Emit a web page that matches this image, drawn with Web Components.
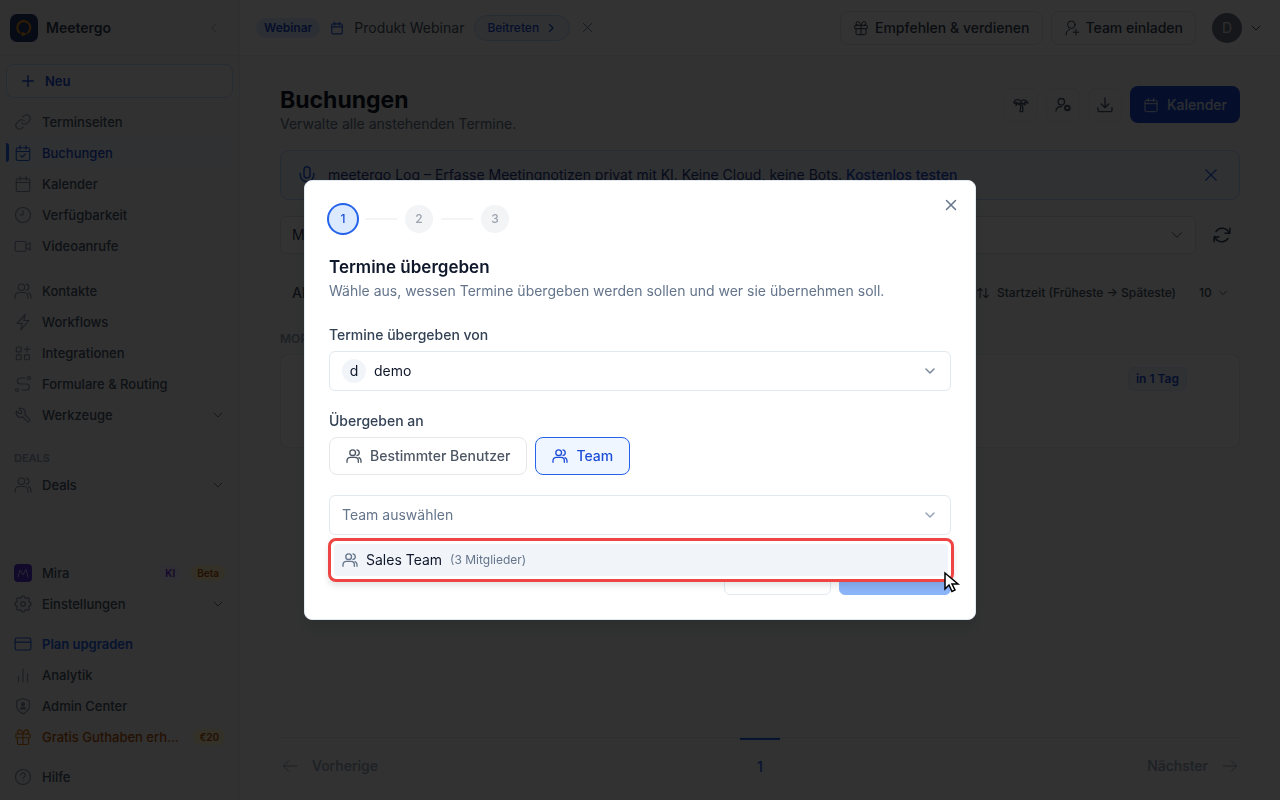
<!DOCTYPE html>
<html lang="de">
<head>
<meta charset="utf-8">
<meta name="viewport" content="width=device-width, initial-scale=1">
<title>Buchungen – Meetergo</title>
<style>
    body {
        margin: 0;
        font-family: Inter, "Liberation Sans", sans-serif;
        font-size: 14px;
        line-height: 20px;
        color: #0f172a;
    }
</style>
</head>
<body>
<meetergo-app></meetergo-app>

<script>
const ICONS = {
    link: '<path d="M10 13a5 5 0 0 0 7.500.5l3-3a5 5 0 0 0-7-7l-1.700 1.700"/><path d="M14 11a5 5 0 0 0-7.500-.5l-3 3a5 5 0 0 0 7 7l1.700-1.700"/>',
    calendar: '<rect x="3" y="5" width="18" height="17" rx="2"/><path d="M8 2v5M16 2v5M3 10h18"/>',
    calendarCheck: '<rect x="3" y="5" width="18" height="17" rx="2"/><path d="M8 2v5M16 2v5M3 10h18M9 15.500l2 2 4-4"/>',
    clock: '<circle cx="12" cy="12" r="10"/><path d="M12 6v6H8"/>',
    video: '<rect x="1.500" y="6" width="14.500" height="13" rx="2"/><path d="M16 11l5.500-3.500v10L16 14"/>',
    users: '<circle cx="10" cy="7" r="4.300"/><path d="M1.500 21.500v-2.500a5 5 0 0 1 5-5h7a5 5 0 0 1 5 5v2.500M16.500 2.800a4.300 4.300 0 0 1 0 8.400M22.500 21.500v-2.500a5 5 0 0 0-3-4.600"/>',
    bolt: '<path d="M15 2L4 14h7l-2 8.500L20 10h-7z"/>',
    apps: '<rect x="3" y="4" width="6.500" height="6.500" rx="1"/><rect x="3" y="14.500" width="6.500" height="6.500" rx="1"/><rect x="14" y="14.500" width="6.500" height="6.500" rx="1"/><path d="M17.500 3.500v7M14 7h7"/>',
    route: '<circle cx="4" cy="20" r="2"/><circle cx="20" cy="4" r="2"/><path d="M14.500 4H8.500a4 4 0 0 0 0 8h8a4 4 0 0 1 0 8H10.500"/>',
    wrench: '<path d="M7 10h3V7L6.500 3.500a6 6 0 0 1 8 8l6 6a2.100 2.100 0 0 1-3 3l-6-6a6 6 0 0 1-8-8z"/>',
    gear: '<g transform="translate(-2.400 -2.400) scale(1.200)"><path d="M10.300 4.300c.4-1.800 3-1.800 3.400 0a1.700 1.700 0 0 0 2.600 1.100c1.500-1 3.300.8 2.400 2.400a1.700 1.700 0 0 0 1 2.500c1.800.4 1.800 3 0 3.400a1.700 1.700 0 0 0-1 2.600c.9 1.500-.9 3.300-2.400 2.400a1.700 1.700 0 0 0-2.600 1c-.4 1.800-3 1.800-3.400 0a1.700 1.700 0 0 0-2.600-1c-1.500.9-3.300-.9-2.400-2.400a1.700 1.700 0 0 0-1-2.600c-1.800-.4-1.800-3 0-3.400a1.700 1.700 0 0 0 1-2.500c-.9-1.600.9-3.400 2.400-2.400a1.700 1.700 0 0 0 2.600-1.100z"/><circle cx="12" cy="12" r="2.500"/></g>',
    card: '<rect x="1.500" y="4" width="21" height="16" rx="2.500"/><path d="M1.500 9.500h21"/>',
    chart: '<path d="M6 21v-7M12 21V4M18 21V10"/>',
    shield: '<path d="M12 2l8.500 3v7c0 5-3.500 8-8.500 10.500C7 20 3.500 17 3.500 12V5z"/><circle cx="12" cy="9.500" r="2" fill="currentColor"/><path d="M8.500 16c.5-3.500 6.500-3.500 7 0z" fill="currentColor"/>',
    gift: '<rect x="2.500" y="8" width="19" height="5" rx="1"/><path d="M12 8v14M4.500 13v7a2 2 0 0 0 2 2h11a2 2 0 0 0 2-2v-7M7.500 8a2.700 2.700 0 0 1 0-5.500C10.500 2.500 12 8 12 8s1.500-5.500 4.500-5.500a2.700 2.700 0 0 1 0 5.500"/>',
    help: '<circle cx="12" cy="12" r="10"/><path d="M9 9.500a3 3 0 1 1 4.300 2.700c-.9.5-1.300 1-1.300 1.800M12 17v.1"/>',
    plus: '<path d="M12 3v18M3 12h18"/>',
    chevronLeft: '<path d="M15 5l-7 7 7 7"/>',
    chevronRight: '<path d="M9 5l7 7-7 7"/>',
    chevronDown: '<path d="M4 8l8 8 8-8"/>',
    close: '<path d="M3 3l18 18M21 3L3 21"/>',
    userPlus: '<circle cx="11" cy="7" r="5.500"/><path d="M3 22.500c0-5 2.500-7.500 5.500-8.500M18 14v8.500M13.800 18.300h8.500"/>',
    userCog: '<circle cx="9.500" cy="7" r="4.800"/><path d="M1.500 21c0-4 3-6.500 8.500-6.500"/><circle cx="18.500" cy="16.500" r="3.500" stroke-width="3"/>',
    palm: '<path d="M1.500 9c-.5-5 7-7 10-2.500 3-3.500 9.500-2.500 11 2.500l-5.500-1.200 1.500 4-6.500-3.300-3 3-1.500-3-3 4.500.5-5z"/><path d="M10.500 9.500c1.500 4 1.500 8 0 12.500h4c.8-5 .3-9-1.500-12.500"/>',
    download: '<path d="M12 1.500V16M6.500 10.500L12 16l5.500-5.500M1.500 16v4a2 2 0 0 0 2 2h17a2 2 0 0 0 2-2v-4"/>',
    mic: '<rect x="8" y="1" width="8" height="15" rx="4"/><path d="M3 10v2a9 9 0 0 0 18 0v-2M12 21v3"/>',
    refresh: '<path d="M21.500 10A9.700 9.700 0 0 0 4 7.500M22.500 3v6.500H16M2.500 14A9.700 9.700 0 0 0 20 16.500M1.500 21v-6.500H8"/>',
    sort: '<path d="M7 20V4M3 8l4-4 4 4M17 4v16M13 16l4 4 4-4"/>',
    arrowLeft: '<path d="M22 12H2M10 4l-8 8 8 8"/>',
    arrowRight: '<path d="M2 12h20M14 4l8 8-8 8"/>'
};

// Base class: every element renders its template once, into an open root
class BaseElement extends HTMLElement {
    constructor() {
        super();
        this.attachShadow({ mode: 'open' });
    }

    connectedCallback() {
        this.shadowRoot.innerHTML = `
        <style>
            * { box-sizing: border-box; }
            button, select { font: inherit; color: inherit; margin: 0; cursor: pointer; }
            a { color: inherit; text-decoration: none; }
            h1, h2, p { margin: 0; }
        </style>` + this.template();
    }
}

class AppIcon extends BaseElement {
    template() {
        const size = this.getAttribute('size') || '18';
        const weight = this.getAttribute('weight') || '1.5';
        return `
        <style>
            :host { display: inline-flex; flex: none; }
        </style>
        <svg width="${size}" height="${size}" viewBox="0 0 24 24" fill="none" stroke="currentColor"
            stroke-width="${weight}" stroke-linecap="round" stroke-linejoin="round" aria-hidden="true">
            ${ICONS[this.getAttribute('name')]}
        </svg>`;
    }
}

class NavItem extends BaseElement {
    template() {
        const icon = this.getAttribute('icon');
        return `
        <style>
            :host { display: block; color: #475569; --icon: #8492a8; }
            :host([active]) { color: #1d4ed8; --icon: #2563eb; }
            :host([tone="blue"]) { color: #2563eb; --icon: #2563eb; font-weight: 600; }
            :host([tone="amber"]) { color: #b45309; --icon: #d97706; }
            a {
                display: flex;
                align-items: center;
                gap: 10px;
                height: 31px;
                padding: 0 8px;
                border-radius: 8px;
                position: relative;
            }
            :host([active]) a { background: #eff3fa; }
            :host([active]) a::before {
                content: "";
                position: absolute;
                left: 0;
                top: 6px;
                bottom: 6px;
                width: 3px;
                border-radius: 0 3px 3px 0;
                background: #2563eb;
            }
            app-icon, slot[name="icon"] { color: var(--icon); }
            .label { flex: 1; min-width: 0; overflow: hidden; white-space: nowrap; text-overflow: ellipsis; }
            .chevron { color: #64748b; margin-right: 1px; }
        </style>
        <a href="#">
            ${icon ? `<app-icon name="${icon}"></app-icon>` : '<slot name="icon"></slot>'}
            <span class="label"><slot></slot></span>
            <slot name="end"></slot>
            ${this.hasAttribute('expandable') ? '<app-icon class="chevron" name="chevronDown" size="12" weight="2"></app-icon>' : ''}
        </a>`;
    }
}

class TagBadge extends BaseElement {
    template() {
        return `
        <style>
            :host {
                display: inline-block;
                flex: none;
                padding: 0 6px;
                border-radius: 8px;
                font-size: 10px;
                line-height: 16px;
                font-weight: 600;
                color: #b45309;
                background: #fef3c7;
            }
            :host([tone="violet"]) { color: #6d28d9; background: #ede9fe; }
        </style>
        <slot></slot>`;
    }
}

class AppSidebar extends BaseElement {
    template() {
        return `
        <style>
            :host {
                display: flex;
                flex-direction: column;
                flex: none;
                width: 240px;
                background: #f3f3f3;
                border-right: 1px solid #e2e8f0;
                font-size: 13px;
                font-weight: 500;
            }
            .brand {
                display: flex;
                align-items: center;
                gap: 8px;
                height: 56px;
                padding: 0 18px 0 10px;
                border-bottom: 1px solid #e2e8f0;
                font-size: 14px;
                font-weight: 600;
                color: #334155;
            }
            .brand span { flex: 1; }
            .brand button { display: flex; border: 0; padding: 0; background: none; color: #94a3b8; }
            nav { display: flex; flex-direction: column; padding: 8px 6px; }
            .new {
                display: flex;
                align-items: center;
                gap: 10px;
                height: 34px;
                margin-bottom: 8px;
                padding: 0 14px;
                border: 1px solid #bfdbfe;
                border-radius: 8px;
                background: #fafafa;
                color: #1d4ed8;
                font-weight: 600;
            }
            .group { margin-bottom: 14px; }
            .heading { padding: 7px 8px 4px; font-size: 11px; line-height: 14px; font-weight: 600; color: #94a3b8; }
            footer { margin-top: auto; padding: 0 6px 8px; }
            footer div { border-top: 1px solid #e9edf2; padding: 4px 0; }
            footer div:first-child { padding-top: 8px; }
            footer div:last-child { padding-bottom: 0; }
        </style>
        <div class="brand">
            <svg width="28" height="28" viewBox="0 0 28 28" aria-hidden="true">
                <rect width="28" height="28" rx="7" fill="#1e3a6e"/>
                <path d="M9.500 18.500A6.500 6.500 0 1 1 19 17.500" fill="none" stroke="#e08a1e" stroke-width="2.200" stroke-linecap="round"/>
                <path d="M19 17.500Q17 20.500 13.500 20.500" fill="none" stroke="#e08a1e" stroke-width="1.200" stroke-linecap="round"/>
                <circle cx="13" cy="20" r="2" fill="#e08a1e"/>
            </svg>
            <span>Meetergo</span>
            <button type="button" aria-label="Seitenleiste einklappen"><app-icon name="chevronLeft" size="14"></app-icon></button>
        </div>
        <nav aria-label="Hauptmenü">
            <button class="new" type="button"><app-icon name="plus" size="14" weight="2.500"></app-icon>Neu</button>
            <div class="group">
                <nav-item icon="link">Terminseiten</nav-item>
                <nav-item icon="calendarCheck" active>Buchungen</nav-item>
                <nav-item icon="calendar">Kalender</nav-item>
                <nav-item icon="clock">Verfügbarkeit</nav-item>
                <nav-item icon="video">Videoanrufe</nav-item>
            </div>
            <div class="group">
                <nav-item icon="users">Kontakte</nav-item>
                <nav-item icon="bolt">Workflows</nav-item>
                <nav-item icon="apps">Integrationen</nav-item>
                <nav-item icon="route">Formulare &amp; Routing</nav-item>
                <nav-item icon="wrench" expandable>Werkzeuge</nav-item>
            </div>
            <div class="heading">DEALS</div>
            <nav-item icon="users" expandable>Deals</nav-item>
        </nav>
        <footer>
            <div>
                <nav-item>
                    <svg slot="icon" width="18" height="18" viewBox="0 0 18 18" aria-hidden="true">
                        <rect width="18" height="18" rx="4" fill="#5b34d6"/>
                        <path d="M4 13l2-7 3 5 3-6 2 8" fill="none" stroke="#c4b5fd" stroke-linecap="round" stroke-linejoin="round"/>
                    </svg>
                    Mira
                    <tag-badge slot="end" tone="violet">KI</tag-badge>
                    <tag-badge slot="end">Beta</tag-badge>
                </nav-item>
                <nav-item icon="gear" expandable>Einstellungen</nav-item>
            </div>
            <div>
                <nav-item icon="card" tone="blue">Plan upgraden</nav-item>
                <nav-item icon="chart">Analytik</nav-item>
                <nav-item icon="shield">Admin Center</nav-item>
                <nav-item icon="gift" tone="amber">Gratis Guthaben erhalten<tag-badge slot="end">€20</tag-badge></nav-item>
            </div>
            <div>
                <nav-item icon="help">Hilfe</nav-item>
            </div>
        </footer>`;
    }
}

class AppTopbar extends BaseElement {
    template() {
        return `
        <style>
            :host {
                display: flex;
                align-items: center;
                justify-content: space-between;
                height: 56px;
                padding: 0 18px 0 16px;
                background: #fff;
                border-bottom: 1px solid #e2e8f0;
            }
            .side { display: flex; align-items: center; gap: 8px; }
            .event { gap: 10px; color: #475569; }
            .tag { padding: 0 8px; border-radius: 10px; background: #dbeafe; color: #1d4ed8; font-size: 12px; font-weight: 600; }
            .calendar { color: #2563eb; }
            button { display: flex; align-items: center; border: 0; background: none; padding: 0; }
            .join {
                gap: 6px;
                height: 26px;
                padding: 0 12px;
                border: 1px solid #bfdbfe;
                border-radius: 13px;
                background: #eff6ff;
                color: #1d4ed8;
                font-size: 12px;
                font-weight: 500;
            }
            .close { padding: 2px; color: #64748b; }
            .outline {
                gap: 6px;
                height: 34px;
                padding: 0 12px;
                border: 1px solid #e5e7eb;
                border-radius: 8px;
                font-weight: 500;
                color: #334155;
            }
            .account { gap: 8px; margin-left: 8px; color: #334155; }
            .avatar {
                width: 30px;
                border-radius: 50%;
                background: #6b7280;
                color: #e5e7eb;
                line-height: 30px;
            }
        </style>
        <div class="side event">
            <span class="tag">Webinar</span>
            <app-icon class="calendar" name="calendar" size="14" weight="2"></app-icon>
            <span>Produkt Webinar</span>
            <button class="join" type="button">Beitreten<app-icon name="chevronRight" size="12" weight="2.500"></app-icon></button>
            <button class="close" type="button" aria-label="Hinweis schließen"><app-icon name="close" size="11" weight="2"></app-icon></button>
        </div>
        <div class="side">
            <button class="outline" type="button"><app-icon name="gift" size="16"></app-icon>Empfehlen &amp; verdienen</button>
            <button class="outline" type="button"><app-icon name="userPlus" size="16"></app-icon>Team einladen</button>
            <button class="account" type="button" aria-label="Konto">
                <span class="avatar">D</span>
                <app-icon name="chevronDown" size="12" weight="2"></app-icon>
            </button>
        </div>`;
    }
}

class BookingsPage extends BaseElement {
    template() {
        return `
        <style>
            :host {
                display: flex;
                flex-direction: column;
                flex: 1;
                padding: 30px 40px 14px;
                background: #f3f7f6;
            }
            button { display: flex; align-items: center; justify-content: center; padding: 0; border: 0; background: none; }
            .tools, .notice, .filters, .list-head, .pager { display: flex; align-items: center; }
            .head { display: flex; justify-content: space-between; align-items: flex-start; margin-bottom: 16px; }
            h1 { font-size: 23px; line-height: 28px; font-weight: 700; }
            .head p { color: #64748b; }
            .tools { gap: 8px; }
            .tool { width: 34px; height: 34px; border: 1px solid #e9edf2; border-radius: 8px; background: #fafafa; color: #475569; }
            .primary {
                gap: 8px;
                height: 37px;
                padding: 0 13px;
                border-radius: 8px;
                background: #1d4ed8;
                color: #dbe3f5;
                font-weight: 500;
            }
            .notice {
                gap: 12px;
                height: 50px;
                margin-bottom: 16px;
                padding: 0 21px 0 17px;
                border: 1px solid #bfdbfe;
                border-radius: 8px;
                background: #eff3fb;
                color: #1e3a8a;
            }
            .notice p { flex: 1; }
            .notice a { color: #1d4ed8; font-weight: 500; }
            .notice app-icon { color: #2563eb; }
            .filters { gap: 14px; }
            select { appearance: none; border: 0; outline: 0; background: none; padding: 0; }
            .field {
                display: flex;
                align-items: center;
                flex: 1;
                height: 38px;
                padding: 0 11px;
                border: 1px solid #dbe1ea;
                border-radius: 6px;
                background: #fff;
                color: #334155;
            }
            .field select { flex: 1; }
            .refresh { width: 20px; height: 38px; margin: 0 8px 0 2px; color: #334155; }
            .list-head { justify-content: space-between; height: 40px; margin: 19px 0 16px; padding: 0 12px; font-weight: 500; color: #475569; }
            .sort { display: flex; align-items: center; gap: 7px; font-size: 12px; }
            .sort label { display: flex; align-items: center; gap: 6px; margin-left: 16px; }
            .day { font-size: 12px; font-weight: 600; color: #94a3b8; margin-bottom: 5px; }
            .card {
                display: flex;
                align-items: flex-start;
                justify-content: flex-end;
                height: 94px;
                padding: 12px 52px;
                border: 1px solid #e2e8f0;
                border-radius: 8px;
                background: #fff;
            }
            .due { padding: 1px 7px; border: 1px solid #dbeafe; border-radius: 6px; background: #eff6ff; color: #1d4ed8; font-size: 12px; font-weight: 600; }
            .pager { justify-content: space-between; margin-top: auto; border-top: 1px solid #e2e8f0; font-weight: 500; color: #94a3b8; }
            .pager a { display: flex; align-items: center; flex: 1; gap: 14px; padding: 0 2px; height: 40px; margin-top: 8px; }
            .pager a:last-child { justify-content: flex-end; }
            .pager a.current { flex: none; justify-content: center; width: 40px; height: 48px; margin-top: -1px; padding-top: 9px; border-top: 2px solid #2563eb; color: #2563eb; }
        </style>
        <div class="head">
            <div>
                <h1>Buchungen</h1>
                <p>Verwalte alle anstehenden Termine.</p>
            </div>
            <div class="tools">
                <button class="tool" type="button" aria-label="Abwesenheit"><app-icon name="palm" size="16" weight="2"></app-icon></button>
                <button class="tool" type="button" aria-label="Termine übergeben"><app-icon name="userCog" size="16" weight="2"></app-icon></button>
                <button class="tool" type="button" aria-label="Exportieren"><app-icon name="download" size="16" weight="2"></app-icon></button>
                <button class="primary" type="button"><app-icon name="calendar" size="16"></app-icon>Kalender</button>
            </div>
        </div>
        <div class="notice">
            <app-icon name="mic" weight="2"></app-icon>
            <p>meetergo Log – Erfasse Meetingnotizen privat mit KI. Keine Cloud, keine Bots. <a href="#">Kostenlos testen</a></p>
            <button type="button" aria-label="Schließen"><app-icon name="close" size="14" weight="2"></app-icon></button>
        </div>
        <div class="filters">
            <div class="field">
                <select aria-label="Ansicht"><option>Meine Termine</option></select>
                <app-icon name="chevronDown" size="14"></app-icon>
            </div>
            <div class="field">
                <select aria-label="Zeitraum"></select>
                <app-icon name="chevronDown" size="14"></app-icon>
            </div>
            <button class="refresh" type="button" aria-label="Aktualisieren"><app-icon name="refresh" weight="2"></app-icon></button>
        </div>
        <div class="list-head">
            <span>Alle</span>
            <div class="sort">
                <app-icon name="sort" size="14" weight="2"></app-icon>
                <span>Startzeit (Früheste → Späteste)</span>
                <label><select aria-label="Einträge pro Seite"><option>10</option></select><app-icon name="chevronDown" size="10" weight="2"></app-icon></label>
            </div>
        </div>
        <div class="day">MORGEN</div>
        <div class="card"><span class="due">in 1 Tag</span></div>
        <nav class="pager" aria-label="Seiten">
            <a href="#"><app-icon name="arrowLeft" size="16"></app-icon>Vorherige</a>
            <a class="current" href="#">1</a>
            <a href="#">Nächster<app-icon name="arrowRight" size="16"></app-icon></a>
        </nav>`;
    }
}

class StepIndicator extends BaseElement {
    template() {
        const current = Number(this.getAttribute('current'));
        const total = Number(this.getAttribute('total'));
        let items = '';
        for (let i = 1; i <= total; i++) {
            items += `<li class="${i === current ? 'current' : ''}">${i}</li>`;
        }
        return `
        <style>
            :host { display: block; }
            ol { display: flex; align-items: center; gap: 48px; margin: 0; padding: 0; list-style: none; }
            li {
                position: relative;
                width: 28px;
                border-radius: 50%;
                background: #f3f4f6;
                color: #9ca3af;
                font-size: 12px;
                line-height: 28px;
                font-weight: 500;
                text-align: center;
            }
            li + li::before {
                content: "";
                position: absolute;
                left: -40px;
                top: 13px;
                width: 32px;
                height: 2px;
                background: #f3f4f6;
            }
            .current { background: #dbeafe; color: #1d4ed8; box-shadow: 0 0 0 2px #2563eb; }
        </style>
        <ol>${items}</ol>`;
    }
}

class SelectField extends BaseElement {
    template() {
        const label = this.getAttribute('label');
        const avatar = this.getAttribute('avatar');
        const value = this.getAttribute('value');
        return `
        <style>
            :host { display: block; position: relative; }
            label { display: block; margin-bottom: 6px; font-weight: 500; color: #334155; }
            .box {
                display: flex;
                align-items: center;
                gap: 8px;
                height: 40px;
                padding: 0 12px;
                border: 1px solid #e2e8f0;
                border-radius: 6px;
                background: #fff;
            }
            .avatar { width: 24px; border-radius: 50%; background: #f1f5f9; line-height: 24px; text-align: center; }
            select { flex: 1; appearance: none; padding: 0; border: 0; outline: 0; background: none; }
            :host([placeholder]) select { color: #64748b; }
            app-icon { color: #94a3b8; margin-right: 2px; }
            :host([avatar]) app-icon { color: #7b879a; }
        </style>
        ${label ? `<label for="field">${label}</label>` : ''}
        <div class="box">
            ${avatar ? `<span class="avatar">${avatar}</span>` : ''}
            <select id="field" ${label ? '' : `aria-label="${value}"`}><option>${value}</option></select>
            <app-icon name="chevronDown" size="12" weight="3"></app-icon>
        </div>
        <slot></slot>`;
    }
}

class OptionList extends BaseElement {
    template() {
        return `
        <style>
            :host {
                position: absolute;
                z-index: 1;
                top: 43px;
                left: -1px;
                right: -3px;
                padding: 3px;
                border: 3px solid #ef4444;
                border-radius: 8px;
                background: #fff;
                box-shadow: 0 4px 6px rgba(0, 0, 0, 0.1);
            }
            button {
                display: flex;
                align-items: center;
                gap: 8px;
                width: 100%;
                height: 32px;
                padding: 0 8px;
                border: 0;
                border-radius: 4px;
                background: #f1f5f9;
            }
            app-icon { color: #64748b; }
            small { font-size: 12px; color: #64748b; }
            .pointer { position: absolute; right: -10px; bottom: -16px; }
        </style>
        <button type="button">
            <app-icon name="users" size="16" weight="2"></app-icon>
            <span><slot></slot></span>
            <small><slot name="note"></slot></small>
        </button>
        <svg class="pointer" width="18" height="24" viewBox="0 0 18 24" aria-hidden="true">
            <path d="M2 2v16l4-4 3 6.500 3-1.500-3-6h6z" fill="#fff" stroke="#000" stroke-width="1.500"/>
        </svg>`;
    }
}

class ModalDialog extends BaseElement {
    template() {
        return `
        <style>
            :host {
                position: fixed;
                inset: 0;
                display: flex;
                align-items: center;
                justify-content: center;
                background: rgba(0, 0, 0, 0.8);
            }
            section {
                position: relative;
                width: 100%;
                max-width: 672px;
                padding: 24px;
                border: 1px solid #e2e8f0;
                border-radius: 8px;
                background: #fff;
                box-shadow: 0 10px 15px rgba(0, 0, 0, 0.1);
            }
            .close {
                position: absolute;
                top: 16px;
                right: 16px;
                display: flex;
                padding: 2px;
                border: 0;
                background: none;
                color: #64748b;
            }
        </style>
        <section role="dialog" aria-modal="true">
            <slot></slot>
            <button class="close" type="button" aria-label="Schließen"><app-icon name="close" size="12" weight="3"></app-icon></button>
        </section>`;
    }
}

class TransferForm extends BaseElement {
    template() {
        return `
        <style>
            :host { display: flex; flex-direction: column; gap: 20px; }
            h2 { font-size: 17px; line-height: 28px; font-weight: 600; }
            header { margin-bottom: 4px; }
            header p { color: #64748b; }
            fieldset { margin: 0; padding: 0; border: 0; }
            legend { margin-bottom: 6px; padding: 0; font-weight: 500; color: #334155; }
            .choices { display: flex; gap: 8px; }
            .choices button {
                display: flex;
                align-items: center;
                gap: 8px;
                height: 38px;
                padding: 0 16px;
                border: 1px solid #e5e7eb;
                border-radius: 8px;
                background: #fff;
                color: #4b5563;
                font-weight: 500;
            }
            .choices button[aria-pressed="true"] { border-color: #2563eb; background: #eff6ff; color: #1d4ed8; }
            footer { display: flex; justify-content: flex-end; gap: 8px; margin-top: 4px; }
            footer button {
                height: 36px;
                padding: 0 16px;
                border: 1px solid #e2e8f0;
                border-radius: 6px;
                background: #fff;
                font-weight: 500;
            }
            footer .next { min-width: 112px; border-color: #8bb3f8; background: #8bb3f8; color: #fff; }
            footer .back { min-width: 107px; }
        </style>
        <step-indicator current="1" total="3"></step-indicator>
        <header>
            <h2>Termine übergeben</h2>
            <p>Wähle aus, wessen Termine übergeben werden sollen und wer sie übernehmen soll.</p>
        </header>
        <select-field label="Termine übergeben von" avatar="d" value="demo"></select-field>
        <fieldset>
            <legend>Übergeben an</legend>
            <div class="choices">
                <button type="button" aria-pressed="false"><app-icon name="users" size="16" weight="2"></app-icon>Bestimmter Benutzer</button>
                <button type="button" aria-pressed="true"><app-icon name="users" size="16" weight="2"></app-icon>Team</button>
            </div>
        </fieldset>
        <select-field value="Team auswählen" placeholder>
            <option-list>Sales Team<span slot="note">(3 Mitglieder)</span></option-list>
        </select-field>
        <footer>
            <button class="back" type="button" aria-label="Abbrechen"></button>
            <button class="next" type="button" aria-label="Weiter" disabled></button>
        </footer>`;
    }
}

class MeetergoApp extends BaseElement {
    template() {
        return `
        <style>
            :host { display: flex; min-height: 100vh; }
            main { display: flex; flex-direction: column; flex: 1; min-width: 0; }
        </style>
        <app-sidebar></app-sidebar>
        <main>
            <app-topbar></app-topbar>
            <bookings-page></bookings-page>
        </main>
        <modal-dialog><transfer-form></transfer-form></modal-dialog>`;
    }
}

customElements.define('app-icon', AppIcon);
customElements.define('nav-item', NavItem);
customElements.define('tag-badge', TagBadge);
customElements.define('app-sidebar', AppSidebar);
customElements.define('app-topbar', AppTopbar);
customElements.define('bookings-page', BookingsPage);
customElements.define('step-indicator', StepIndicator);
customElements.define('select-field', SelectField);
customElements.define('option-list', OptionList);
customElements.define('modal-dialog', ModalDialog);
customElements.define('transfer-form', TransferForm);
customElements.define('meetergo-app', MeetergoApp);
</script>
</body>
</html>
